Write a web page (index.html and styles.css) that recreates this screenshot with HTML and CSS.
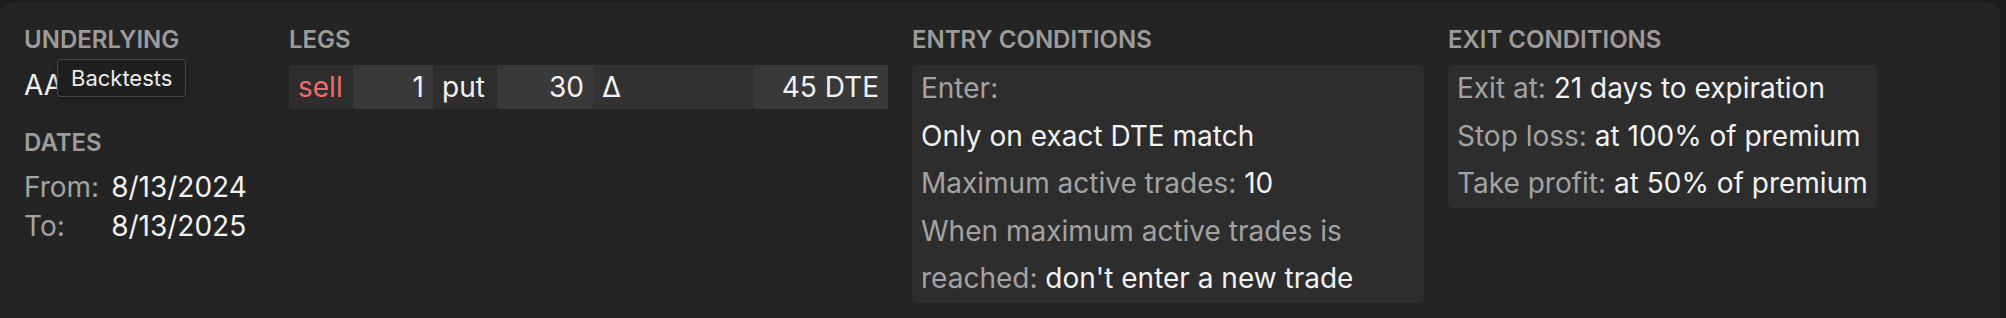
FILE: index.html
```html
<!DOCTYPE html>
<html lang="en">

<head>
    <meta charset="UTF-8">
    <meta name="viewport" content="width=device-width, initial-scale=1.0">
    <title>Backtest</title>

    <link rel="stylesheet" href="styles.css">
</head>

<body>
    <div class="panel">
        <div class="col col-underlying">
            <div class="group">
                <h3 class="title">Underlying</h3>
                <div class="ticker">
                    AA
                    <span class="tooltip">Backtests</span>
                </div>
            </div>
            <div class="group dates">
                <h3 class="title">Dates</h3>
                <div class="date-grid">
                    <span class="label">From:</span>
                    <span class="value">8/13/2024</span>
                    <span class="label">To:</span>
                    <span class="value">8/13/2025</span>
                </div>
            </div>
        </div>

        <div class="col col-legs">
            <h3 class="title">Legs</h3>
            <div class="leg">
                <span class="cell side">sell</span>
                <span class="cell num qty">1</span>
                <span class="cell type">put</span>
                <span class="cell num strike">30</span>
                <span class="cell mid delta">Δ</span>
                <span class="cell num dte">45 DTE</span>
            </div>
        </div>

        <div class="col col-entry">
            <h3 class="title">Entry conditions</h3>
            <div class="box">
                <p><span class="label">Enter:</span></p>
                <p><span class="value">Only on exact DTE match</span></p>
                <p><span class="label">Maximum active trades:</span> <span class="value">10</span></p>
                <p><span class="label">When maximum active trades is</span> <span class="label">reached:</span> <span class="value">don't enter a new trade</span></p>
            </div>
        </div>

        <div class="col col-exit">
            <h3 class="title">Exit conditions</h3>
            <div class="box">
                <p><span class="label">Exit at:</span> <span class="value">21 days to expiration</span></p>
                <p><span class="label">Stop loss:</span> <span class="value">at 100% of premium</span></p>
                <p><span class="label">Take profit:</span> <span class="value">at 50% of premium</span></p>
            </div>
        </div>
    </div>
</body>

</html>
```

FILE: styles.css
```css
* {
    margin: 0;
    padding: 0;
    box-sizing: border-box;
}

html,
body {
    height: 100%;
}

body {
    background: #1c1c1c;
    font-family: Inter, "Noto Sans", "Liberation Sans", sans-serif;
    font-size: 28px;
    color: #f2f2f2;
    overflow: hidden;
}

.panel {
    margin: 2px 6px 0 0;
    height: calc(100% - 2px);
    background: #242424;
    border-radius: 12px 12px 0 0;
    padding: 23px 24px 0 24px;
    display: flex;
    gap: 24px;
}

/* 小标题 */
.title {
    font-size: 24px;
    line-height: 29px;
    font-weight: 600;
    text-transform: uppercase;
    color: #9c9c9c;
    margin-bottom: 11px;
}

.label {
    color: #a3a3a3;
}

.value {
    color: #f2f2f2;
}

.col-underlying {
    width: 241px;
}

.ticker {
    position: relative;
    line-height: 40px;
}

/* 悬浮提示 */
.tooltip {
    position: absolute;
    left: 33px;
    top: -6px;
    height: 38px;
    padding: 0 13px;
    font-size: 22px;
    line-height: 36px;
    color: #ececec;
    background: #1f1f1f;
    border: 1px solid #484848;
    border-radius: 3px;
    box-shadow: 0 2px 6px rgba(0, 0, 0, .35);
    white-space: nowrap;
}

.dates {
    margin-top: 23px;
}

.date-grid {
    display: grid;
    grid-template-columns: auto 1fr;
    column-gap: 12px;
    line-height: 39px;
}

.col-legs {
    width: 599px;
}

.leg {
    display: flex;
    height: 44px;
    line-height: 44px;
}

.leg .cell {
    padding: 0 9px;
    background: #2d2d2d;
}

.leg .num {
    background: #393939;
    text-align: right;
}

.leg .side {
    width: 64px;
    color: #ef6a6a;
}

.leg .qty {
    width: 80px;
}

.leg .type {
    width: 64px;
}

.leg .strike {
    width: 96px;
}

.leg .delta {
    flex: 1;
    background: #323232;
}

.leg .dte {
    width: 134px;
}

.col-entry {
    width: 512px;
}

.box {
    background: #2d2d2d;
    border-radius: 5px;
    padding: 0 9px;
    line-height: 1.7;
}

.col-exit .box {
    width: fit-content;
}
```
